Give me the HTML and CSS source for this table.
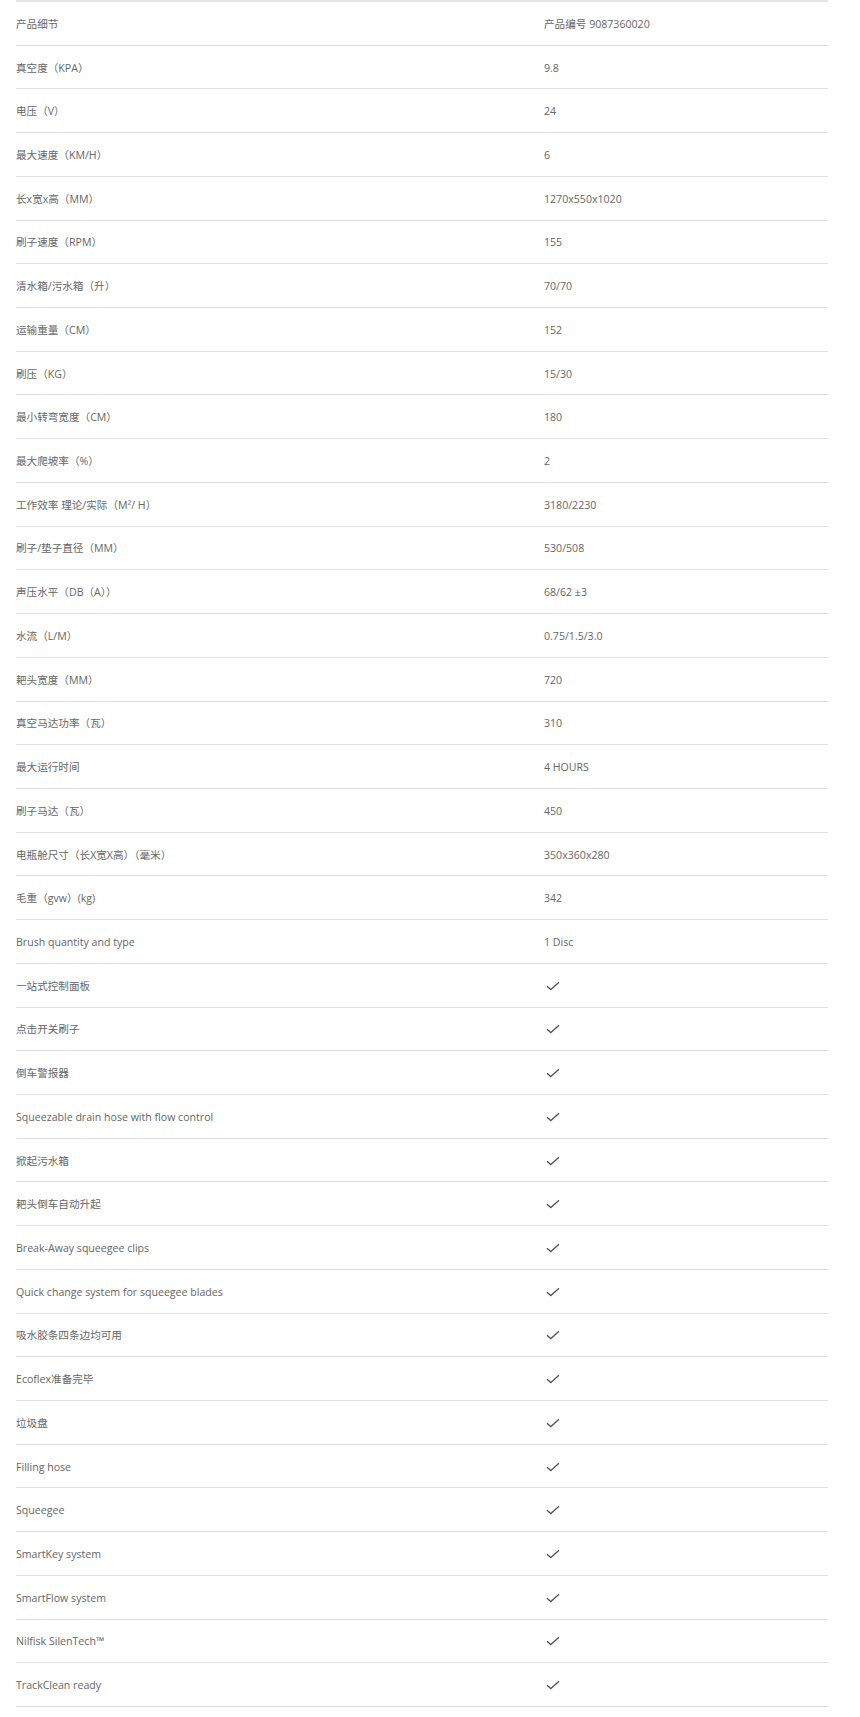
FILE: index.html
```html
<!DOCTYPE html>
<html lang="zh-CN">
<head>
    <meta charset="UTF-8">
    <meta name="viewport" content="width=device-width, initial-scale=1.0">
    <title>产品细节</title>
    <link rel="stylesheet" href="styles.css">
</head>
<body>
    <div class="specs">
        <div class="row"><span class="label">产品细节</span><span class="value">产品编号 9087360020</span></div>
        <div class="row"><span class="label">真空度（KPA）</span><span class="value">9.8</span></div>
        <div class="row"><span class="label">电压（V）</span><span class="value">24</span></div>
        <div class="row"><span class="label">最大速度（KM/H）</span><span class="value">6</span></div>
        <div class="row"><span class="label">长x宽x高（MM）</span><span class="value">1270x550x1020</span></div>
        <div class="row"><span class="label">刷子速度（RPM）</span><span class="value">155</span></div>
        <div class="row"><span class="label">清水箱/污水箱（升）</span><span class="value">70/70</span></div>
        <div class="row"><span class="label">运输重量（CM）</span><span class="value">152</span></div>
        <div class="row"><span class="label">刷压（KG）</span><span class="value">15/30</span></div>
        <div class="row"><span class="label">最小转弯宽度（CM）</span><span class="value">180</span></div>
        <div class="row"><span class="label">最大爬坡率（%）</span><span class="value">2</span></div>
        <div class="row"><span class="label">工作效率 理论/实际（M²/ H）</span><span class="value">3180/2230</span></div>
        <div class="row"><span class="label">刷子/垫子直径（MM）</span><span class="value">530/508</span></div>
        <div class="row"><span class="label">声压水平（DB（A））</span><span class="value">68/62 ±3</span></div>
        <div class="row"><span class="label">水流（L/M）</span><span class="value">0.75/1.5/3.0</span></div>
        <div class="row"><span class="label">耙头宽度（MM）</span><span class="value">720</span></div>
        <div class="row"><span class="label">真空马达功率（瓦）</span><span class="value">310</span></div>
        <div class="row"><span class="label">最大运行时间</span><span class="value">4 HOURS</span></div>
        <div class="row"><span class="label">刷子马达（瓦）</span><span class="value">450</span></div>
        <div class="row"><span class="label">电瓶舱尺寸（长X宽X高）（毫米）</span><span class="value">350x360x280</span></div>
        <div class="row"><span class="label">毛重（gvw）(kg)</span><span class="value">342</span></div>
        <div class="row"><span class="label">Brush quantity and type</span><span class="value">1 Disc</span></div>
        <div class="row"><span class="label">一站式控制面板</span><span class="value"><svg class="check" viewBox="0 0 14 10"><path d="M1 5.2 L4.8 8.6 L13 1.2"/></svg></span></div>
        <div class="row"><span class="label">点击开关刷子</span><span class="value"><svg class="check" viewBox="0 0 14 10"><path d="M1 5.2 L4.8 8.6 L13 1.2"/></svg></span></div>
        <div class="row"><span class="label">倒车警报器</span><span class="value"><svg class="check" viewBox="0 0 14 10"><path d="M1 5.2 L4.8 8.6 L13 1.2"/></svg></span></div>
        <div class="row"><span class="label">Squeezable drain hose with flow control</span><span class="value"><svg class="check" viewBox="0 0 14 10"><path d="M1 5.2 L4.8 8.6 L13 1.2"/></svg></span></div>
        <div class="row"><span class="label">掀起污水箱</span><span class="value"><svg class="check" viewBox="0 0 14 10"><path d="M1 5.2 L4.8 8.6 L13 1.2"/></svg></span></div>
        <div class="row"><span class="label">耙头倒车自动升起</span><span class="value"><svg class="check" viewBox="0 0 14 10"><path d="M1 5.2 L4.8 8.6 L13 1.2"/></svg></span></div>
        <div class="row"><span class="label">Break-Away squeegee clips</span><span class="value"><svg class="check" viewBox="0 0 14 10"><path d="M1 5.2 L4.8 8.6 L13 1.2"/></svg></span></div>
        <div class="row"><span class="label">Quick change system for squeegee blades</span><span class="value"><svg class="check" viewBox="0 0 14 10"><path d="M1 5.2 L4.8 8.6 L13 1.2"/></svg></span></div>
        <div class="row"><span class="label">吸水胶条四条边均可用</span><span class="value"><svg class="check" viewBox="0 0 14 10"><path d="M1 5.2 L4.8 8.6 L13 1.2"/></svg></span></div>
        <div class="row"><span class="label">Ecoflex准备完毕</span><span class="value"><svg class="check" viewBox="0 0 14 10"><path d="M1 5.2 L4.8 8.6 L13 1.2"/></svg></span></div>
        <div class="row"><span class="label">垃圾盘</span><span class="value"><svg class="check" viewBox="0 0 14 10"><path d="M1 5.2 L4.8 8.6 L13 1.2"/></svg></span></div>
        <div class="row"><span class="label">Filling hose</span><span class="value"><svg class="check" viewBox="0 0 14 10"><path d="M1 5.2 L4.8 8.6 L13 1.2"/></svg></span></div>
        <div class="row"><span class="label">Squeegee</span><span class="value"><svg class="check" viewBox="0 0 14 10"><path d="M1 5.2 L4.8 8.6 L13 1.2"/></svg></span></div>
        <div class="row"><span class="label">SmartKey system</span><span class="value"><svg class="check" viewBox="0 0 14 10"><path d="M1 5.2 L4.8 8.6 L13 1.2"/></svg></span></div>
        <div class="row"><span class="label">SmartFlow system</span><span class="value"><svg class="check" viewBox="0 0 14 10"><path d="M1 5.2 L4.8 8.6 L13 1.2"/></svg></span></div>
        <div class="row"><span class="label">Nilfisk SilenTech™</span><span class="value"><svg class="check" viewBox="0 0 14 10"><path d="M1 5.2 L4.8 8.6 L13 1.2"/></svg></span></div>
        <div class="row"><span class="label">TrackClean ready</span><span class="value"><svg class="check" viewBox="0 0 14 10"><path d="M1 5.2 L4.8 8.6 L13 1.2"/></svg></span></div>
    </div>
</body>
</html>
```

FILE: styles.css
```css
body {
    margin: 0;
    padding: 0;
    background-color: #ffffff;
    font-family: "Open Sans", "Noto Sans CJK SC", sans-serif;
    font-size: 10.6px;
    color: #666666;
}

.specs {
    width: 812px;
    margin-left: 16px;
    border-top: 2px solid #e6e6e6;
}

.row {
    display: grid;
    grid-template-columns: 528px 1fr;
    align-items: center;
    height: 43.72px;
    box-sizing: border-box;
    border-bottom: 1px solid #e0e0e0;
    padding-top: 1px;
}

.label,
.value {
    line-height: 16px;
}

.check {
    display: block;
    width: 14px;
    height: 10px;
    margin-left: 2px;
    fill: none;
    stroke: #555555;
    stroke-width: 1.3;
}
```
